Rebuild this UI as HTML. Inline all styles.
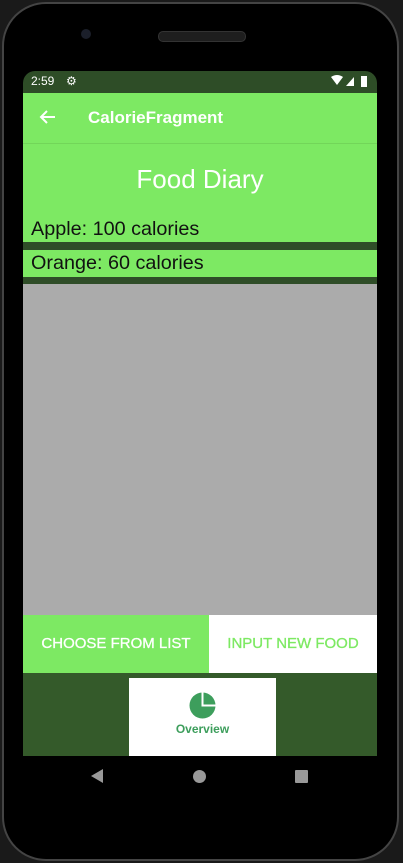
<!DOCTYPE html><html><head><style>
body{margin:0;width:403px;height:863px;background:#1a1a1a;position:relative;overflow:hidden;font-family:"Liberation Sans",sans-serif}
.phone{position:absolute;left:2px;top:2px;width:397px;height:859px;border-radius:44px;background:#000;border:2px solid #444;box-sizing:border-box}
.a{position:absolute}
</style></head><body>
<div class="phone"></div>
<div class="a" style="left:158px;top:31px;width:86px;height:9px;border-radius:5px;background:#1e1e1e;border:1px solid #333"></div>
<div class="a" style="left:81px;top:29px;width:10px;height:10px;border-radius:50%;background:#1b1f2a"></div>
<div class="a" style="left:23px;top:71px;width:354px;height:22px;background:#2e4d27;border-radius:12px 12px 0 0"></div>
<div class="a" style="left:31px;top:74px;color:#fff;font-size:12px">2:59</div>
<div class="a" style="left:66px;top:74px;color:#fff;font-size:12px">⚙</div>
<svg class="a" style="left:330px;top:74px" width="42" height="14"><path d="M1 3 Q7 -1 13 3 L7 11Z" fill="#fff"/><path d="M16 12 L24 3 L24 12Z" fill="#fff"/><rect x="31" y="2" width="6" height="11" fill="#fff"/></svg>
<div class="a" style="left:23px;top:93px;width:354px;height:50px;background:#7de963;border-bottom:1px solid #72d659"></div>
<svg class="a" style="left:39px;top:110px" width="18" height="16"><path d="M16 7H3M8 1L2 7L8 13" stroke="#fff" stroke-width="2" fill="none"/></svg>
<div class="a" style="left:88px;top:108px;color:#fff;font-size:17px;font-weight:bold">CalorieFragment</div>
<div class="a" style="left:23px;top:144px;width:354px;height:99px;background:#7de963"></div>
<div class="a" style="left:23px;top:164px;width:354px;text-align:center;color:#fff;font-size:26px">Food Diary</div>
<div class="a" style="left:31px;top:218px;color:#111;font-size:19.8px">Apple: 100 calories</div>
<div class="a" style="left:23px;top:242px;width:354px;height:8px;background:#2f4d28"></div>
<div class="a" style="left:23px;top:250px;width:354px;height:27px;background:#7de963"></div>
<div class="a" style="left:31px;top:252px;color:#111;font-size:19.8px">Orange: 60 calories</div>
<div class="a" style="left:23px;top:277px;width:354px;height:7px;background:#2f4d28"></div>
<div class="a" style="left:23px;top:284px;width:354px;height:331px;background:#ababab"></div>
<div class="a" style="left:23px;top:615px;width:186px;height:58px;background:#7de963;color:#fff;font-size:15px;line-height:58px;text-align:center;-webkit-text-stroke:0.3px #fff">CHOOSE FROM LIST</div>
<div class="a" style="left:209px;top:615px;width:168px;height:58px;background:#fff;color:#7de963;font-size:15px;line-height:58px;text-align:center;-webkit-text-stroke:0.3px #7de963">INPUT NEW FOOD</div>
<div class="a" style="left:23px;top:673px;width:354px;height:83px;background:#345a2a"></div>
<div class="a" style="left:129px;top:678px;width:147px;height:78px;background:#fff"></div>
<svg class="a" style="left:189px;top:692px" width="28" height="28"><circle cx="13.5" cy="13.5" r="13" fill="#3d9e5c"/><path d="M13.5 0.5V13.5H26.5" stroke="#fff" stroke-width="2" fill="none"/></svg>
<div class="a" style="left:129px;top:722px;width:147px;text-align:center;color:#3d9e5c;font-size:12px;font-weight:bold">Overview</div>
<svg class="a" style="left:89px;top:768px" width="16" height="16"><path d="M14 1V15L2 8Z" fill="#999"/></svg>
<div class="a" style="left:193px;top:770px;width:13px;height:13px;border-radius:50%;background:#999"></div>
<div class="a" style="left:295px;top:770px;width:13px;height:13px;background:#999;border-radius:1px"></div>
</body></html>
